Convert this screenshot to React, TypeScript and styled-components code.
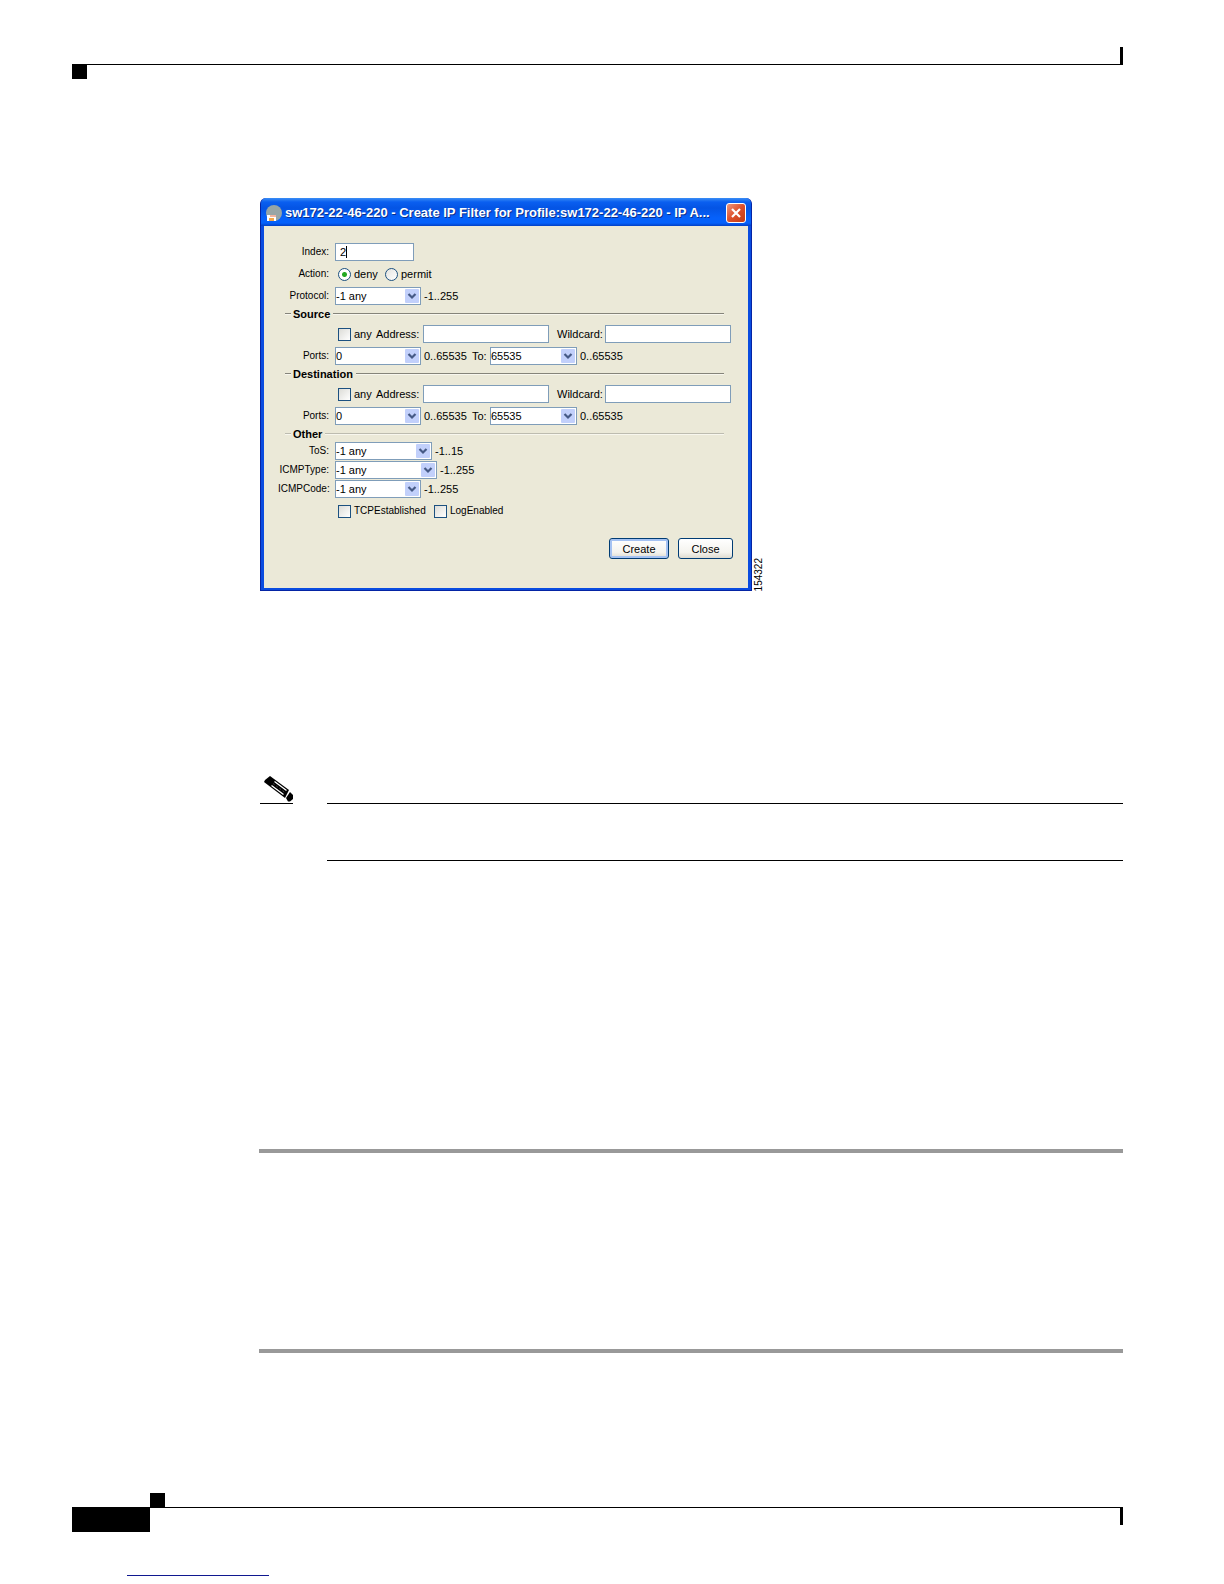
import React, { useId } from "react";
import styled, { createGlobalStyle, css } from "styled-components";

const GlobalStyle = createGlobalStyle`
  *, *::before, *::after { box-sizing: border-box; }
  body {
    margin: 0;
    background: #fff;
    color: #000;
    font-family: "Liberation Sans", Arial, sans-serif;
  }
`;

const Page = styled.div`
  padding: 47px 101px 8px 72px;
`;

const Header = styled.header`
  display: flex;
  flex-direction: column;
`;

const EndTick = styled.span<{ $below?: boolean }>`
  align-self: ${(p) => (p.$below ? "flex-start" : "flex-end")};
  width: 3px;
  height: 17px;
  background: #000;
`;

const Line = styled.hr`
  width: 100%;
  height: 1px;
  margin: 0;
  border: 0;
  background: #000;
`;

const Square = styled.span`
  width: 15px;
  height: 14px;
  background: #000;
`;

const Content = styled.main`
  padding: 119px 0 0 188px;
`;

const Figure = styled.figure`
  display: flex;
  align-items: flex-end;
  gap: 2px;
  margin: 0;
`;

const FigureNumber = styled.figcaption`
  writing-mode: vertical-rl;
  transform: rotate(180deg);
  font-size: 10px;
  line-height: 10px;
`;

const Dialog = styled.form`
  width: 492px;
  padding: 0 3px 2px;
  border: solid #0524a4;
  border-width: 0 1px 1px;
  border-radius: 6px 6px 0 0;
  background: #0a4ce0;
  overflow: hidden;
  font-size: 11px;
  line-height: 14px;
`;

const TitleBar = styled.div`
  display: flex;
  align-items: center;
  height: 28px;
  margin: 0 -3px;
  padding: 2px 5px 0;
  background: linear-gradient(#3a8df5 0, #0a5ff0 4px, #0454e4 10px, #0561fb 20px, #0561fb 25px, #0340c4 28px);
  color: #fff;
`;

const Title = styled.h1`
  flex: 1;
  margin: 0 0 0 3px;
  overflow: hidden;
  white-space: nowrap;
  font-size: 13px;
  line-height: 16px;
  font-weight: bold;
  text-shadow: 1px 1px #0a2f8c;
`;

const CloseIcon = styled.button`
  width: 20px;
  height: 20px;
  padding: 0;
  border: 1px solid #fff;
  border-radius: 3px;
  background: linear-gradient(135deg, #ec9880, #dd4f2a 50%, #c23c14);
  svg { display: block; }
`;

const Body = styled.div`
  padding: 17px 14px 29px;
  background: #ebe9d8;
`;

const Row = styled.div<{ $top?: number }>`
  display: flex;
  align-items: center;
  height: 18px;
  margin-top: ${(p) => p.$top ?? 0}px;
  white-space: nowrap;
`;

const Lead = styled.label`
  flex: none;
  width: 51px;
  margin-right: 6px;
  font-size: 10px;
  text-align: right;
`;

const Field = styled.input<{ $wide?: boolean }>`
  display: block;
  flex: none;
  width: ${(p) => (p.$wide ? 126 : 79)}px;
  height: 18px;
  padding: 0 4px;
  border: 1px solid #7f9db9;
  background: #fff;
  font: inherit;
`;

const Focused = styled.span`
  position: relative;
  &::after {
    content: "";
    position: absolute;
    top: 3px;
    left: 11px;
    width: 1px;
    height: 12px;
    background: #000;
  }
`;

const Group = styled.fieldset<{ $faint?: boolean }>`
  min-width: 0;
  margin: 0;
  padding: 0;
  border: 0;
  --rule: ${(p) => (p.$faint ? "#bdbcb0" : "#85847a")};
  --space: ${(p) => (p.$faint ? 1 : 4)}px;
`;

const GroupTitle = styled.legend`
  display: flex;
  align-items: center;
  gap: 2px;
  width: 446px;
  height: 16px;
  margin: 0 0 var(--space);
  padding: 1px 0 0 7px;
  font-weight: bold;
  &::before, &::after {
    content: "";
    height: 2px;
    border-top: 1px solid var(--rule);
    border-bottom: 1px solid #f8f7ee;
  }
  &::before { width: 6px; }
  &::after { flex: 1; margin-left: 1px; }
`;

const toggle = css`
  appearance: none;
  flex: none;
  width: 13px;
  height: 13px;
  margin: 0 3px;
  border: 1px solid #1c5180;
`;

const Check = styled.input.attrs({ type: "checkbox" })`
  ${toggle}
  background: linear-gradient(135deg, #dcdcd7, #fff);
  &:checked { background: #21a121; }
`;

const Radio = styled.input.attrs({ type: "radio" })`
  ${toggle}
  border-radius: 50%;
  background: linear-gradient(135deg, #e4e4e0, #fff);
  &:checked { background: radial-gradient(circle, #22a822 0 2px, #fff 3px); }
`;

const Option = styled.label<{ $width?: number; $small?: boolean }>`
  display: flex;
  align-items: center;
  width: ${(p) => (p.$width ? p.$width + "px" : "auto")};
  font-size: ${(p) => (p.$small ? 10 : 11)}px;
`;

const SelectBox = styled.span<{ $width: number }>`
  position: relative;
  flex: none;
  width: ${(p) => p.$width}px;
  height: 18px;
  svg {
    position: absolute;
    top: 2px;
    right: 2px;
    pointer-events: none;
  }
`;

const Select = styled.select`
  appearance: none;
  display: block;
  width: 100%;
  height: 18px;
  padding: 0;
  border: 1px solid #7f9db9;
  border-radius: 0;
  background: #fff;
  color: #000;
  font: inherit;
`;

const Range = styled.span<{ $width?: number }>`
  flex: none;
  width: ${(p) => (p.$width ? p.$width + "px" : "auto")};
  margin-left: 3px;
`;

const Caption = styled.label<{ $width: number }>`
  flex: none;
  width: ${(p) => p.$width}px;
`;

const SecondCaption = styled(Caption)`
  margin-left: 8px;
`;

const Buttons = styled.div`
  display: flex;
  justify-content: flex-end;
  gap: 9px;
  margin-top: 18px;
  padding-right: 1px;
`;

const Push = styled.button<{ $primary?: boolean }>`
  width: ${(p) => (p.$primary ? 60 : 55)}px;
  height: 21px;
  padding: 0;
  border: 1px solid #003c74;
  border-radius: 3px;
  background: linear-gradient(#fff, #f4f3ee 70%, #dedbd0);
  box-shadow: ${(p) => (p.$primary ? "inset 0 0 0 2px #a5c2f2" : "none")};
  color: #000;
  font: inherit;
`;

const Note = styled.section`
  display: grid;
  grid-template-columns: 33px 1fr;
  column-gap: 34px;
  align-items: end;
  margin-top: 185px;
`;

const NoteIcon = styled.div`
  padding-left: 4px;
  border-bottom: 1px solid #000;
  svg { display: block; }
`;

const NoteBody = styled.div`
  grid-column: 2;
  height: 57px;
  border-bottom: 1px solid #000;
`;

const Procedure = styled.section`
  height: 204px;
  margin: 288px 0 0 -1px;
  border: solid #999;
  border-width: 4px 0;
`;

const Footer = styled.footer`
  margin-top: 140px;
`;

const FooterSquare = styled(Square)`
  display: block;
  margin-left: 78px;
`;

const FooterRow = styled.div`
  display: flex;
  justify-content: space-between;
  border-top: 1px solid #000;
`;

const PageNumber = styled.span`
  width: 78px;
  height: 24px;
  background: #000;
`;

const FooterLink = styled.a`
  display: block;
  width: 142px;
  height: 1px;
  margin: 43px 0 0 55px;
  background: #101890;
`;

function Combo({ id, value, width }: { id: string; value: string; width: number }) {
  return (
    <SelectBox $width={width}>
      <Select id={id} defaultValue={value}>
        <option>{value}</option>
      </Select>
      <svg width="14" height="14" viewBox="0 0 14 14" aria-hidden="true">
        <rect width="14" height="14" rx="1" fill="#c2d0fb" />
        <path d="M3.5 5 7 8.5 10.500 5" fill="none" stroke="#465a86" strokeWidth="2.200" />
      </svg>
    </SelectBox>
  );
}

function Choice({ label, value, range, width, top }: { label: string; value: string; range: string; width: number; top?: number }) {
  const id = useId();
  return (
    <Row $top={top}>
      <Lead htmlFor={id}>{label}:</Lead>
      <Combo id={id} value={value} width={width} />
      <Range>{range}</Range>
    </Row>
  );
}

function Endpoint({ title }: { title: string }) {
  const id = useId();
  return (
    <Group>
      <GroupTitle>{title}</GroupTitle>
      <Row>
        <Lead as="span" />
        <Option $width={41}><Check />any</Option>
        <Caption htmlFor={id + "a"} $width={47}>Address:</Caption>
        <Field id={id + "a"} $wide />
        <SecondCaption htmlFor={id + "w"} $width={48}>Wildcard:</SecondCaption>
        <Field id={id + "w"} $wide />
      </Row>
      <Row $top={4}>
        <Lead htmlFor={id + "p"}>Ports:</Lead>
        <Combo id={id + "p"} value="0" width={86} />
        <Range $width={48}>0..65535</Range>
        <Caption htmlFor={id + "t"} $width={18}>To:</Caption>
        <Combo id={id + "t"} value="65535" width={87} />
        <Range>0..65535</Range>
      </Row>
    </Group>
  );
}

export default function App() {
  return (
    <>
      <GlobalStyle />
      <Page>
        <Header>
          <EndTick />
          <Line />
          <Square />
        </Header>
        <Content>
          <Figure>
            <Dialog onSubmit={(e) => e.preventDefault()}>
              <TitleBar>
                <svg width="16" height="16" viewBox="0 0 16 16" aria-hidden="true">
                  <circle cx="8" cy="8" r="8" fill="#97a5a6" />
                  <path d="M1 10h9v6H1z" fill="#fff" />
                  <path d="M4 10h6v2H4z" fill="#f1b5a0" />
                  <path d="M3 13h5v3H3z" fill="#f1a64a" />
                </svg>
                <Title>sw172-22-46-220 - Create IP Filter for Profile:sw172-22-46-220 - IP A...</Title>
                <CloseIcon type="button" aria-label="Close window">
                  <svg width="18" height="18" viewBox="0 0 18 18">
                    <path d="m5 5 8 8m0-8-8 8" stroke="#fff" strokeWidth="2.200" />
                  </svg>
                </CloseIcon>
              </TitleBar>
              <Body>
                <Row>
                  <Lead htmlFor="index">Index:</Lead>
                  <Focused><Field id="index" defaultValue="2" /></Focused>
                </Row>
                <Row $top={4}>
                  <Lead as="span">Action:</Lead>
                  <Option $width={47}><Radio name="action" defaultChecked />deny</Option>
                  <Option><Radio name="action" />permit</Option>
                </Row>
                <Choice label="Protocol" value="-1 any" range="-1..255" width={86} top={4} />
                <Endpoint title="Source" />
                <Endpoint title="Destination" />
                <Group $faint>
                  <GroupTitle>Other</GroupTitle>
                  <Choice label="ToS" value="-1 any" range="-1..15" width={97} />
                  <Choice label="ICMPType" value="-1 any" range="-1..255" width={102} top={1} />
                  <Choice label="ICMPCode" value="-1 any" range="-1..255" width={86} top={1} />
                  <Row $top={4}>
                    <Lead as="span" />
                    <Option $width={96} $small><Check />TCPEstablished</Option>
                    <Option $small><Check />LogEnabled</Option>
                  </Row>
                </Group>
                <Buttons>
                  <Push type="submit" $primary>Create</Push>
                  <Push type="button">Close</Push>
                </Buttons>
              </Body>
            </Dialog>
            <FigureNumber>154322</FigureNumber>
          </Figure>
          <Note>
            <NoteIcon>
              <svg width="29" height="27" viewBox="0 0 29 27" aria-hidden="true">
                <path d="M0 6 1 4 6 0l19 14-4 8z" />
                <path d="m10.500 5.500 12 9M7.500 9.500l12 9" stroke="#fff" strokeWidth="1.300" />
                <path d="m9 7.500 12 9" stroke="#777" strokeWidth="0.600" strokeDasharray="2 2" />
                <path d="m22 22 4-6 3 3v4l-3 2.500h-2z" />
              </svg>
            </NoteIcon>
            <Line />
            <NoteBody />
          </Note>
          <Procedure />
        </Content>
        <Footer>
          <FooterSquare />
          <FooterRow>
            <PageNumber />
            <EndTick $below />
          </FooterRow>
          <FooterLink href="#top" aria-label="Back to top" />
        </Footer>
      </Page>
    </>
  );
}
